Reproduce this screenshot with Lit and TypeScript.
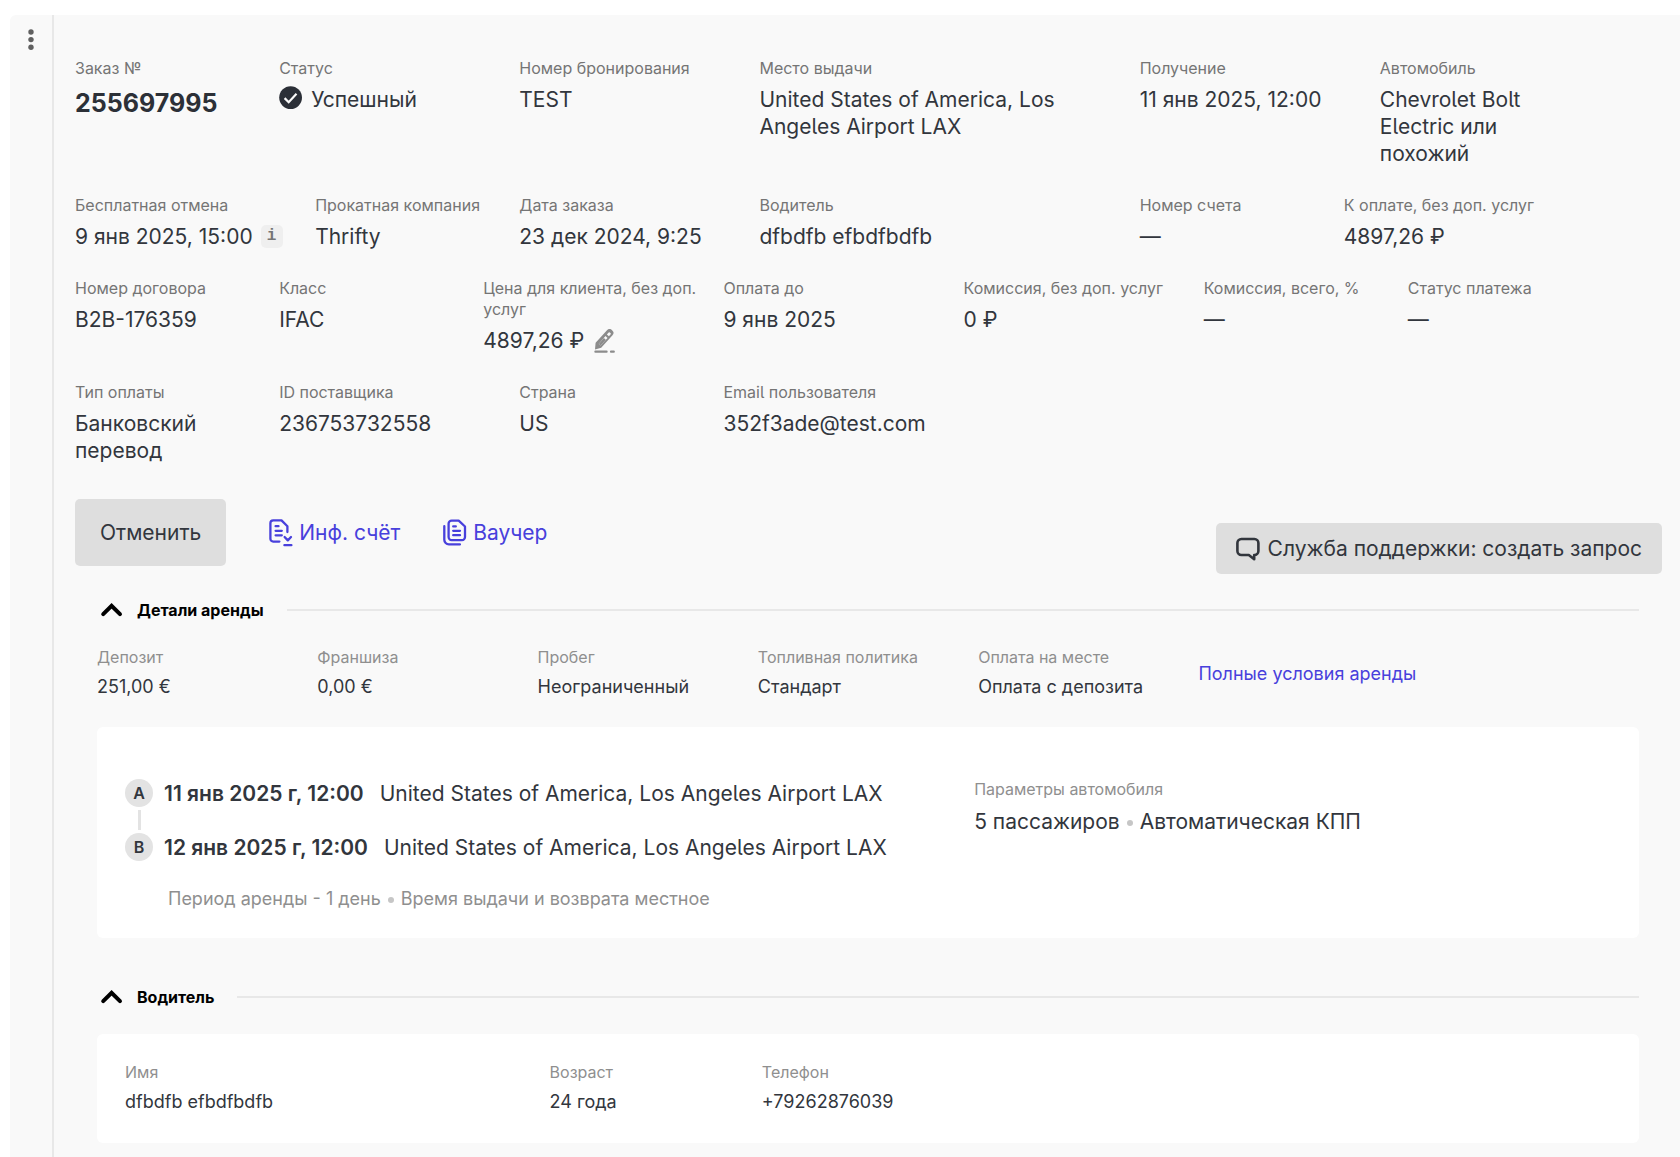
import { LitElement, html, css, svg, nothing, type TemplateResult } from "lit";
import { customElement, state } from "lit/decorators.js";

interface Field {
  label: string;
  value: string;
  kind?: "order" | "status" | "info" | "edit";
}

const ROWS: { layout: string; fields: Field[] }[] = [
  {
    layout: "row-one",
    fields: [
      { label: "Заказ №", value: "255697995", kind: "order" },
      { label: "Статус", value: "Успешный", kind: "status" },
      { label: "Номер бронирования", value: "TEST" },
      { label: "Место выдачи", value: "United States of America, Los Angeles Airport LAX" },
      { label: "Получение", value: "11 янв 2025, 12:00" },
      { label: "Автомобиль", value: "Chevrolet Bolt Electric или похожий" },
    ],
  },
  {
    layout: "row-two",
    fields: [
      { label: "Бесплатная отмена", value: "9 янв 2025, 15:00", kind: "info" },
      { label: "Прокатная компания", value: "Thrifty" },
      { label: "Дата заказа", value: "23 дек 2024, 9:25" },
      { label: "Водитель", value: "dfbdfb efbdfbdfb" },
      { label: "Номер счета", value: "—" },
      { label: "К оплате, без доп. услуг", value: "4897,26 ₽" },
    ],
  },
  {
    layout: "row-three",
    fields: [
      { label: "Номер договора", value: "B2B-176359" },
      { label: "Класс", value: "IFAC" },
      { label: "Цена для клиента, без доп. услуг", value: "4897,26 ₽", kind: "edit" },
      { label: "Оплата до", value: "9 янв 2025" },
      { label: "Комиссия, без доп. услуг", value: "0 ₽" },
      { label: "Комиссия, всего, %", value: "—" },
      { label: "Статус платежа", value: "—" },
    ],
  },
  {
    layout: "row-four",
    fields: [
      { label: "Тип оплаты", value: "Банковский перевод" },
      { label: "ID поставщика", value: "236753732558" },
      { label: "Страна", value: "US" },
      { label: "Email пользователя", value: "352f3ade@test.com" },
    ],
  },
];

const TERMS: Field[] = [
  { label: "Депозит", value: "251,00 €" },
  { label: "Франшиза", value: "0,00 €" },
  { label: "Пробег", value: "Неограниченный" },
  { label: "Топливная политика", value: "Стандарт" },
  { label: "Оплата на месте", value: "Оплата с депозита" },
];

const DRIVER: Field[] = [
  { label: "Имя", value: "dfbdfb efbdfbdfb" },
  { label: "Возраст", value: "24 года" },
  { label: "Телефон", value: "+79262876039" },
];

const icon = (name: string, w: number, h: number, body: TemplateResult | unknown) => html`
  <svg class="icon ${name}" width=${w} height=${h} viewBox="0 0 ${w} ${h}" fill="none" aria-hidden="true">${body}</svg>
`;

const dotsIcon = () =>
  icon("dots", 6, 22, svg`
    <circle cx="3" cy="3" r="2.7" fill="currentColor"/>
    <circle cx="3" cy="10.6" r="2.7" fill="currentColor"/>
    <circle cx="3" cy="18.2" r="2.7" fill="currentColor"/>`);

const checkIcon = () =>
  icon("check", 24, 24, svg`
    <circle cx="11.6" cy="11.6" r="11.4" fill="currentColor"/>
    <path d="M5.6 12.1l4.1 4.1 7.8-8.4" stroke="#fafafa" stroke-width="2.2"/>`);

const pencilIcon = () =>
  icon("pencil", 22, 24, svg`
    <path fill="currentColor" fill-rule="evenodd" d="M1 20.4l.6-6.6L13 1.2a3.4 3.4 0 0 1 4.8-.2l.5.4a3.4 3.4 0 0 1 .2 4.8L7.2 18.8zM4.7 14.9l1.9 1.6 6.9-7.6-2-1.8zM12.9 5.5l2 1.8 1.6-1.8a1 1 0 0 0-.1-1.4l-.6-.5a1 1 0 0 0-1.4.1z"/>
    <path d="M4.7 14.9l1.9 1.6 5.2-5.7-1.9-1.7z" fill="currentColor"/>
    <path d="M1.4 22.7h11.2M17 22.7h2.8" stroke="currentColor" stroke-width="2.2" stroke-linecap="round"/>`);

const invoiceIcon = () =>
  icon("invoice", 24, 28, svg`
    <g stroke="currentColor" stroke-width="2.3" stroke-linecap="round" stroke-linejoin="round">
      <path d="M10.4 22.6H4.2a2.8 2.8 0 0 1-2.8-2.8V4.2a2.8 2.8 0 0 1 2.8-2.8h8.3l5.9 5.8v5.9"/>
      <path d="M6.6 7.2h2.9M6.6 11.8h6.2M6.6 16.3h6.2"/>
      <path d="M15.6 18l3.2 3.4L22 18M15.4 26.2h7"/>
    </g>`);

const voucherIcon = () =>
  icon("voucher", 24, 28, svg`
    <g stroke="currentColor" stroke-width="2.3" stroke-linecap="round" stroke-linejoin="round">
      <path d="M5.6 4.6a3 3 0 0 1 3-3h7.1l6.3 5.9v10.6a3 3 0 0 1-3 3H8.6a3 3 0 0 1-3-3z"/>
      <path d="M10.2 7.4h2.6M10.2 11.8h6.8M10.2 16.2h6.8"/>
      <path d="M1.3 7.2v13.6a4.6 4.6 0 0 0 4.6 4.6h11"/>
    </g>`);

const chatIcon = () =>
  icon("chat", 24, 24, svg`
    <path d="M5.4 2h13a4 4 0 0 1 4 4v8a4 4 0 0 1-4 4h-.2v4.2L12.8 18H5.4a4 4 0 0 1-4-4V6a4 4 0 0 1 4-4z"
      stroke="currentColor" stroke-width="2.6" stroke-linejoin="round"/>`);

const chevronIcon = () =>
  icon("chevron", 28, 20, svg`
    <path d="M6.2 14.2l8.4-8.4 8.4 8.4" stroke="currentColor" stroke-width="4" stroke-linecap="round" stroke-linejoin="miter"/>`);

@customElement("app-root")
export class OrderCard extends LitElement {
  @state() private rentalOpen = true;
  @state() private driverOpen = true;

  static styles = css`
    :host {
      display: flex;
      flex-direction: column;
      box-sizing: border-box;
      min-height: 100vh;
      padding: 15px 0 0 10px;
      background: #fff;
      color: #32363d;
      font-family: Inter, Roboto, "Liberation Sans", sans-serif;
      font-feature-settings: "cv05";
      font-size: 21px;
      line-height: 27px;
    }
    * {
      box-sizing: border-box;
    }
    button {
      border: 0;
      padding: 0;
      background: none;
      color: inherit;
      font: inherit;
      font-feature-settings: inherit;
      cursor: pointer;
    }
    a {
      color: #4840dc;
      text-decoration: none;
    }
    dl,
    dd,
    h2,
    p,
    ol {
      margin: 0;
      padding: 0;
    }
    ol {
      list-style: none;
    }
    .icon {
      display: block;
      flex: none;
    }
    .card {
      flex: 1;
      display: flex;
      background: #f9f9f9;
      border-top-left-radius: 6px;
    }
    .rail {
      flex: none;
      width: 44px;
      display: flex;
      justify-content: center;
      align-items: flex-start;
      padding-top: 14px;
      border-right: 2px solid #e8e8e8;
      color: #606060;
    }
    .content {
      flex: 1;
      min-width: 0;
      padding: 43px 18px 15px 21px;
    }
    .row {
      display: grid;
      margin-bottom: 28px;
    }
    .row-one {
      grid-template-columns: 204fr 240fr 240fr 380fr 240fr 282fr;
    }
    .row-two {
      grid-template-columns: 240fr 204fr 240fr 380fr 204fr 318fr;
    }
    .row-three {
      grid-template-columns: 204fr 204fr 240fr 240fr 240fr 204fr 254fr;
    }
    .row-four {
      grid-template-columns: 204fr 240fr 204fr 938fr;
    }
    .field {
      min-width: 0;
      padding-right: 24px;
    }
    .row-one .field:last-child {
      padding-right: 90px;
    }
    .row-two .field:first-child {
      padding-right: 0;
    }
    dt {
      color: #757575;
      font-size: 16px;
      line-height: 21px;
      margin-bottom: 8px;
    }
    .row dt {
      margin-bottom: 7px;
    }
    .order {
      font-size: 25px;
      font-weight: 700;
      line-height: 34px;
      color: #2c3037;
    }
    .with-icon {
      display: flex;
      align-items: center;
      gap: 8px;
    }
    .check {
      margin-top: -4px;
      color: #2b2f37;
    }
    .info {
      width: 22px;
      height: 23px;
      border-radius: 5px;
      background: #efefef;
      color: #757575;
      font: bold 16px/23px "Liberation Mono", monospace;
    }
    .row-two .with-icon {
      white-space: nowrap;
    }
    .edit {
      margin-left: 2px;
      color: #8c8c8c;
    }
    .actions {
      display: flex;
      justify-content: space-between;
      min-height: 75px;
      margin: 35px 0 24px;
    }
    .actions-main {
      display: flex;
      align-items: center;
      align-self: flex-start;
      gap: 43px;
    }
    .cancel {
      height: 67px;
      padding: 0 25px;
      border-radius: 5px;
      background: #dedede;
    }
    .doc-link {
      display: flex;
      align-items: center;
      gap: 6px;
    }
    .support {
      display: flex;
      align-items: center;
      align-self: flex-end;
      gap: 8px;
      height: 51px;
      padding: 0 20px;
      border-radius: 5px;
      background: #dedede;
    }
    .section {
      margin: 0 23px 0 22px;
    }
    .section + .section {
      margin-top: 47px;
    }
    .section-head {
      display: flex;
      align-items: center;
      gap: 23px;
      margin-bottom: 25px;
    }
    .section-head::after {
      content: "";
      flex: 1;
      height: 2px;
      background: #e8e8e8;
    }
    .section-title {
      font-size: 16px;
      line-height: 24px;
      font-weight: 700;
      color: #000;
    }
    .toggle {
      display: flex;
      align-items: center;
      gap: 12px;
    }
    .closed .chevron {
      transform: rotate(180deg);
    }
    .facts {
      display: grid;
      grid-template-columns: repeat(7, 1fr);
    }
    .facts dt,
    .muted {
      color: #8f8f8f;
    }
    .facts dt {
      margin-bottom: 5px;
    }
    .facts dd,
    .facts a {
      font-size: 18px;
      white-space: nowrap;
    }
    .facts a {
      align-self: center;
    }
    .panel {
      padding: 28px;
      border-radius: 6px;
      background: #fff;
    }
    .facts + .panel {
      margin-top: 27px;
    }
    .route {
      display: grid;
      grid-template-columns: 4fr 3fr;
      padding: 52px 28px 26px;
    }
    .stop {
      display: flex;
      align-items: center;
      gap: 11px;
    }
    .badge {
      flex: none;
      width: 28px;
      height: 28px;
      border-radius: 50%;
      background: #e3e3e3;
      text-align: center;
      font-size: 16px;
      line-height: 28px;
      font-weight: 600;
    }
    .when {
      margin-right: 5px;
      font-weight: 600;
    }
    .link-line {
      width: 3px;
      height: 20px;
      margin: 3px 13px;
      background: #e3e3e3;
    }
    .period {
      margin: 24px 0 0 43px;
      font-size: 18px;
    }
    .dot {
      display: inline-block;
      width: 6px;
      height: 6px;
      margin: 0 7px;
      border-radius: 50%;
      background: #c6c6c6;
      vertical-align: middle;
    }
    .driver {
      display: grid;
      grid-template-columns: 2fr 1fr 4fr;
    }
  `;

  private renderValue(f: Field) {
    switch (f.kind) {
      case "order":
        return html`<dd class="order">${f.value}</dd>`;
      case "status":
        return html`<dd class="with-icon">${checkIcon()}${f.value}</dd>`;
      case "info":
        return html`<dd class="with-icon">${f.value}<button class="info" type="button" aria-label="Подробнее">i</button></dd>`;
      case "edit":
        return html`<dd class="with-icon">${f.value}<button class="edit" type="button" aria-label="Изменить цену">${pencilIcon()}</button></dd>`;
      default:
        return html`<dd>${f.value}</dd>`;
    }
  }

  private renderField = (f: Field) => html`
    <div class="field"><dt>${f.label}</dt>${this.renderValue(f)}</div>
  `;

  private renderFact = (f: Field) => html`<div><dt>${f.label}</dt><dd>${f.value}</dd></div>`;

  private renderHead(title: string, open: boolean, toggle: () => void) {
    return html`
      <div class="section-head ${open ? "" : "closed"}">
        <h2 class="section-title">
          <button class="toggle" type="button" aria-expanded=${open} @click=${toggle}>${chevronIcon()}${title}</button>
        </h2>
      </div>
    `;
  }

  private renderStop(letter: string, when: string, where: string) {
    return html`
      <div class="stop"><span class="badge">${letter}</span><span class="when">${when}</span><span>${where}</span></div>
    `;
  }

  render() {
    const place = "United States of America, Los Angeles Airport LAX";
    return html`
      <article class="card">
        <div class="rail"><button type="button" aria-label="Меню">${dotsIcon()}</button></div>
        <div class="content">
          ${ROWS.map((r) => html`<dl class="row ${r.layout}">${r.fields.map(this.renderField)}</dl>`)}
          <div class="actions">
            <div class="actions-main">
              <button class="cancel" type="button">Отменить</button>
              <a class="doc-link" href="#invoice">${invoiceIcon()}Инф. счёт</a>
              <a class="doc-link" href="#voucher">${voucherIcon()}Ваучер</a>
            </div>
            <button class="support" type="button">${chatIcon()}Служба поддержки: создать запрос</button>
          </div>
          <section class="section">
            ${this.renderHead("Детали аренды", this.rentalOpen, () => (this.rentalOpen = !this.rentalOpen))}
            ${this.rentalOpen
              ? html`
                  <dl class="facts">
                    ${TERMS.map(this.renderFact)}
                    <a href="#terms">Полные условия аренды</a>
                  </dl>
                  <div class="panel route">
                    <div>
                      <ol>
                        <li>${this.renderStop("A", "11 янв 2025 г, 12:00", place)}<div class="link-line"></div></li>
                        <li>${this.renderStop("B", "12 янв 2025 г, 12:00", place)}</li>
                      </ol>
                      <p class="period muted">Период аренды - 1 день<span class="dot"></span>Время выдачи и возврата местное</p>
                    </div>
                    <dl>
                      <dt class="muted">Параметры автомобиля</dt>
                      <dd>5 пассажиров<span class="dot"></span>Автоматическая КПП</dd>
                    </dl>
                  </div>
                `
              : nothing}
          </section>
          <section class="section">
            ${this.renderHead("Водитель", this.driverOpen, () => (this.driverOpen = !this.driverOpen))}
            ${this.driverOpen ? html`<dl class="panel facts driver">${DRIVER.map(this.renderFact)}</dl>` : nothing}
          </section>
        </div>
      </article>
    `;
  }
}
